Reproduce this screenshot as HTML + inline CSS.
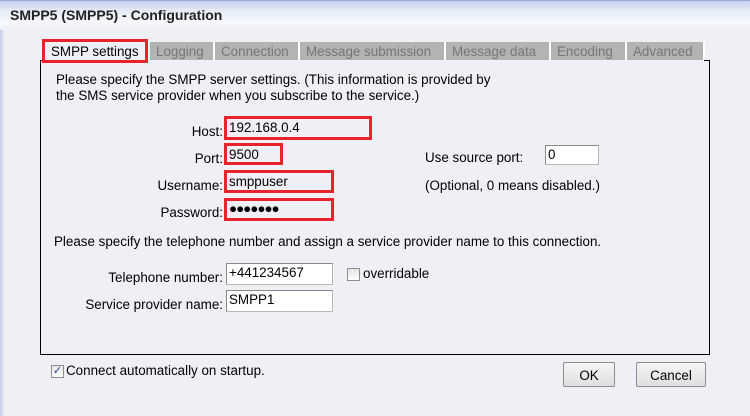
<!DOCTYPE html>
<html><head><style>
*{margin:0;padding:0;box-sizing:border-box}
body{width:750px;height:416px;background:#eff0f5;font-family:"Liberation Sans",Arial,sans-serif;font-size:13.4px;color:#000;position:relative;overflow:hidden}
.title{position:absolute;left:0;top:0;width:750px;height:30px;background:linear-gradient(#c9d3ec 0,#e6ebf7 10px,#f7f8fb 22px,#eff0f5 30px);border-top:1px solid #9aa8d8}
.title span{position:absolute;left:10px;top:6px;font-weight:bold;font-size:14px;color:#222}
.lb{position:absolute;left:0;top:30px;width:4px;height:386px;background:linear-gradient(90deg,#c4cde8,#e3e7f3)}
.a{position:absolute;white-space:nowrap}
.tab{position:absolute;top:42px;height:18px;background:#b3b3b3;color:#767676;font-size:13.4px;padding:2px 0 0 6px;border-right:2px solid #fff}
.panel{position:absolute;left:40px;top:60px;width:670px;height:295px;border:1px solid #000;border-top:none}
.pt{position:absolute;top:60px;height:1px;background:#000}
.in{position:absolute;background:#fff;border:1px solid #b8b8b8;border-top-color:#8a8a8a;border-left-color:#8a8a8a;padding:1px 2px;font-size:13.4px}
.red{position:absolute;border:3px solid #e8232c}
.lbl{position:absolute;text-align:right;white-space:nowrap}
.btn{position:absolute;border:1px solid #8d8d8d;border-radius:2px;background:linear-gradient(#f6f6f6,#dedede);text-align:center;padding-top:5px}
.cb{position:absolute;width:13px;height:13px;border:1px solid #8d8d8d;background:linear-gradient(#e6e6e6,#fff)}
</style></head><body>
<div class="title"><span>SMPP5 (SMPP5) - Configuration</span></div>
<div class="lb"></div>
<div class="tab" style="left:150px;width:65px">Logging</div>
<div class="tab" style="left:215px;width:85px">Connection</div>
<div class="tab" style="left:300px;width:146px">Message submission</div>
<div class="tab" style="left:446px;width:105px">Message data</div>
<div class="tab" style="left:551px;width:76px">Encoding</div>
<div class="tab" style="left:627px;width:78px">Advanced</div>
<div class="panel"></div>
<div class="pt" style="left:40px;width:4px"></div>
<div class="pt" style="left:704px;width:6px"></div>
<div class="a" style="left:51px;top:44px">SMPP settings</div>
<div class="red" style="left:42px;top:39px;width:106px;height:24px"></div>
<div class="a" style="left:56px;top:72px;line-height:16px">Please specify the SMPP server settings. (This information is provided by<br>the SMS service provider when you subscribe to the service.)</div>
<div class="lbl" style="right:527px;top:124px">Host:</div>
<div class="lbl" style="right:527px;top:151px">Port:</div>
<div class="lbl" style="right:527px;top:178px">Username:</div>
<div class="lbl" style="right:527px;top:205px">Password:</div>
<div class="a" style="left:229px;top:120px">192.168.0.4</div>
<div class="a" style="left:229px;top:147px">9500</div>
<div class="a" style="left:229px;top:174px">smppuser</div>
<div class="a" style="left:229px;top:201px;letter-spacing:-1px">●●●●●●●</div>
<div class="red" style="left:224px;top:116px;width:148px;height:24px"></div>
<div class="red" style="left:224px;top:143px;width:59px;height:22px"></div>
<div class="red" style="left:224px;top:170px;width:110px;height:23px"></div>
<div class="red" style="left:224px;top:198px;width:110px;height:23px"></div>
<div class="a" style="left:425px;top:150px">Use source port:</div>
<div class="in" style="left:545px;top:145px;width:54px;height:20px">0</div>
<div class="a" style="left:425px;top:178px">(Optional, 0 means disabled.)</div>
<div class="a" style="left:54px;top:234px">Please specify the telephone number and assign a service provider name to this connection.</div>
<div class="lbl" style="right:527px;top:270px">Telephone number:</div>
<div class="lbl" style="right:527px;top:297px">Service provider name:</div>
<div class="in" style="left:226px;top:263px;width:107px;height:22px">+441234567</div>
<div class="in" style="left:226px;top:290px;width:107px;height:22px">SMPP1</div>
<div class="cb" style="left:347px;top:268px"></div>
<div class="a" style="left:363px;top:266px">overridable</div>
<div class="cb" style="left:51px;top:365px;font-size:11px;color:#2a44a0;line-height:11px;text-align:center">✓</div>
<div class="a" style="left:66px;top:363px">Connect automatically on startup.</div>
<div class="btn" style="left:563px;top:362px;width:52px;height:25px">OK</div>
<div class="btn" style="left:636px;top:362px;width:70px;height:25px">Cancel</div>
</body></html>
